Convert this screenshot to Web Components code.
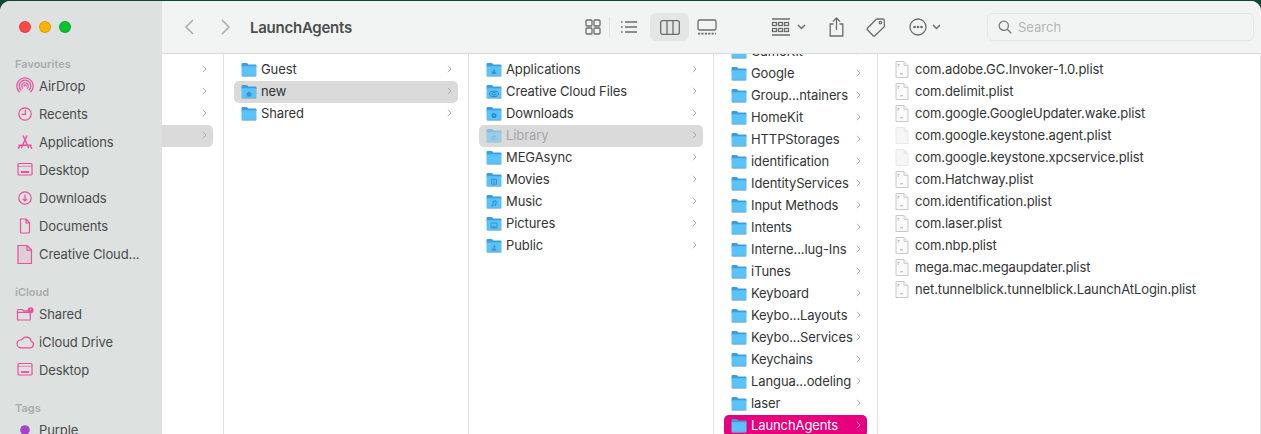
<!DOCTYPE html>
<html>
<head>
<meta charset="utf-8">
<title>LaunchAgents</title>
<style>
    html, body { margin: 0; height: 434px; overflow: hidden; background: #0b4a33; }
    body { font-family: Inter, Roboto, "Liberation Sans", sans-serif; font-size: 13px; }
</style>
</head>
<body>
<finder-window>
    <finder-sidebar slot="sidebar">
        <side-head first>Favourites</side-head>
        <side-item icon="airdrop">AirDrop</side-item>
        <side-item icon="recents">Recents</side-item>
        <side-item icon="apps">Applications</side-item>
        <side-item icon="desktop">Desktop</side-item>
        <side-item icon="downloads">Downloads</side-item>
        <side-item icon="documents">Documents</side-item>
        <side-item icon="cloudfile">Creative Cloud...</side-item>
        <side-head>iCloud</side-head>
        <side-item icon="shared">Shared</side-item>
        <side-item icon="cloud">iCloud Drive</side-item>
        <side-item icon="desktop">Desktop</side-item>
        <side-head>Tags</side-head>
        <side-item icon="purple">Purple</side-item>
    </finder-sidebar>
    <finder-toolbar slot="toolbar" title="LaunchAgents"></finder-toolbar>

    <finder-column slot="columns" style="--w:62px;--pad-l:0px;--pad-r:10px">
        <finder-row kind="none"></finder-row>
        <finder-row kind="none"></finder-row>
        <finder-row kind="none"></finder-row>
        <finder-row kind="none" state="open" flat></finder-row>
    </finder-column>
    <finder-column slot="columns" style="--w:245px">
        <finder-row>Guest</finder-row>
        <finder-row glyph="home" state="open">new</finder-row>
        <finder-row>Shared</finder-row>
    </finder-column>
    <finder-column slot="columns" style="--w:245px">
        <finder-row glyph="apps">Applications</finder-row>
        <finder-row glyph="cc">Creative Cloud Files</finder-row>
        <finder-row glyph="down">Downloads</finder-row>
        <finder-row glyph="lib" state="dim">Library</finder-row>
        <finder-row>MEGAsync</finder-row>
        <finder-row glyph="movie">Movies</finder-row>
        <finder-row glyph="music">Music</finder-row>
        <finder-row glyph="pic">Pictures</finder-row>
        <finder-row glyph="pub">Public</finder-row>
    </finder-column>
    <finder-column slot="columns" style="--w:164px;--top:-18px">
        <finder-row>GameKit</finder-row>
        <finder-row>Google</finder-row>
        <finder-row>Group...ntainers</finder-row>
        <finder-row>HomeKit</finder-row>
        <finder-row>HTTPStorages</finder-row>
        <finder-row>identification</finder-row>
        <finder-row>IdentityServices</finder-row>
        <finder-row>Input Methods</finder-row>
        <finder-row>Intents</finder-row>
        <finder-row>Interne...lug-Ins</finder-row>
        <finder-row>iTunes</finder-row>
        <finder-row>Keyboard</finder-row>
        <finder-row>Keybo...Layouts</finder-row>
        <finder-row>Keybo...Services</finder-row>
        <finder-row>Keychains</finder-row>
        <finder-row>Langua...odeling</finder-row>
        <finder-row>laser</finder-row>
        <finder-row state="active">LaunchAgents</finder-row>
    </finder-column>
    <finder-column slot="columns" style="--w:383px;--pad-l:10px">
        <finder-row kind="plist">com.adobe.GC.Invoker-1.0.plist</finder-row>
        <finder-row kind="plist">com.delimit.plist</finder-row>
        <finder-row kind="plist">com.google.GoogleUpdater.wake.plist</finder-row>
        <finder-row kind="blank">com.google.keystone.agent.plist</finder-row>
        <finder-row kind="blank">com.google.keystone.xpcservice.plist</finder-row>
        <finder-row kind="plist">com.Hatchway.plist</finder-row>
        <finder-row kind="plist">com.identification.plist</finder-row>
        <finder-row kind="plist">com.laser.plist</finder-row>
        <finder-row kind="plist">com.nbp.plist</finder-row>
        <finder-row kind="plist">mega.mac.megaupdater.plist</finder-row>
        <finder-row kind="plist">net.tunnelblick.tunnelblick.LaunchAtLogin.plist</finder-row>
    </finder-column>
</finder-window>

<script>
// pink line icons of the sidebar, all on a 24x20 box
const sideIcons = {
    airdrop: `<g fill="none"><path d="M6.6 16.2a8.2 8.2 0 1 1 10.8 0"/><path d="M8.2 14.4a5.8 5.8 0 1 1 7.6 0"/><path d="M9.9 12.6a3.3 3.3 0 1 1 4.2 0"/><path d="M11.2 10.6a1 1 0 1 1 1.6 0"/></g>`,
    recents: `<g fill="none"><circle cx="12" cy="10" r="6.2"/><path d="M12.4 5.8v4.6H8.6"/></g>`,
    apps: `<g fill="none"><path d="M10 3.5l5.8 12.8M14 3.5L8.2 16.3M5.4 13.2h13.2M5 16.6l1.8-2.6M19 16.6l-1.8-2.6" stroke-width="1.4"/></g>`,
    desktop: `<rect x="5" y="3.5" width="14" height="11.5" rx="1" fill="none"/><path d="M5 6.3h14" stroke-opacity=".5"/><path d="M8 12h8" stroke-width="1.8"/>`,
    downloads: `<g fill="none"><circle cx="12" cy="10" r="6.2"/><path d="M12 6.6v6.2M9.8 10.8l2.2 2.2 2.2-2.2"/></g>`,
    documents: `<path fill="none" d="M7.5 3h5.6l3.4 3.8v9.2a1 1 0 0 1-1 1H8.5a1 1 0 0 1-1-1z M13 3v4h3.5"/>`,
    cloudfile: `<path fill="#e0ced6" d="M5 1.5h9.2L18.5 6v13.5H5z"/><path fill="none" d="M14 1.5V6.2h4.5"/>`,
    shared: `<path fill="none" d="M4.5 16V6.5a1 1 0 0 1 1-1h4l1.2 1.4h6.6V16zM4.5 8.4h12.8"/><circle cx="17.6" cy="6.2" r="3" fill="#ee4e9b" stroke="none"/><path d="M17.6 4.8v1.6" stroke="#dde1e0" stroke-width="1"/>`,
    cloud: `<path fill="none" d="M7.4 15.8h10a3.3 3.3 0 0 0 .8-6.4 5 5 0 0 0-9.4-1.6 4 4 0 0 0-1.4 8z"/>`,
    purple: `<circle cx="12" cy="10" r="4.8" fill="#a246c9" stroke="none"/>`
};

// darker mark that sits on the face of a system folder
const folderGlyphs = {
    home: `<path d="M8 7.6l3.2 2.5h-.9v2.3H5.7v-2.3h-.9z" fill="#3a90d2"/>`,
    apps: `<path d="M8 6.6l2.6 5.4H5.4z" fill="#3a90d2"/>`,
    cc: `<ellipse cx="8" cy="9.8" rx="4.6" ry="2.7" fill="none" stroke="#2d86cb"/><ellipse cx="8" cy="9.8" rx="2.2" ry="1.3" fill="none" stroke="#2d86cb"/>`,
    down: `<circle cx="8" cy="9.5" r="2.5" fill="#2d86cb"/><circle cx="8" cy="9.5" r=".8" fill="#5ac4fa"/>`,
    lib: `<path d="M8 6.8l2.6 2.4H5.4zM5 10.6h6v1H5z" fill="#3a90d2"/>`,
    movie: `<path d="M5.5 7.2h5v5h-5z" fill="none" stroke="#3a90d2"/><path d="M8 7.2v5" stroke="#3a90d2"/>`,
    music: `<path d="M7 11.6V7.4l3-.6v4" fill="none" stroke="#2d86cb"/><circle cx="6.3" cy="11.6" r=".9" fill="#2d86cb"/><circle cx="9.3" cy="10.9" r=".9" fill="#2d86cb"/>`,
    pic: `<path d="M5 7h6v5H5z" fill="none" stroke="#3a90d2"/><path d="M5.4 11.6l2-2 1.4 1.2 1-.8 1.2 1.6z" fill="#3a90d2"/>`,
    pub: `<path d="M8 7.4a1.2 1.2 0 1 1 0 2.3 1.2 1.2 0 0 1 0-2.3zM5.5 12.6c.3-3 4.7-3 5 0z" fill="#3a90d2"/>`
};

function folderSvg(glyph) {
    return `<svg width="16" height="15" viewBox="0 0 16 15">
        <path d="M.5 2.4C.5 1.6 1 1 1.8 1h3.6c.5 0 .8.2 1.1.5l.8.9h7c.8 0 1.2.5 1.2 1.2V5H.5z" fill="#3f9ddf"/>
        <path d="M.5 4.2h15v9.1c0 .7-.4 1.1-1.1 1.1H1.6c-.7 0-1.1-.4-1.1-1.1z" fill="#5ac4fa"/>
        <path d="M.8 14.1h14.4" stroke="#7f9fb5" stroke-width=".7"/>
        ${folderGlyphs[glyph] || ''}
    </svg>`;
}

function docSvg(lines) {
    const marks = lines
        ? `<path d="M2.5 3.4h2M2.5 5h1.4M5 12.8h3" stroke="#b2b2b2" stroke-width="1"/>`
        : '';
    return `<svg width="14" height="17" viewBox="0 0 14 17">
        <path d="M1 .5h8l4 4v12H1z" fill="${lines ? '#fafafa' : '#f6f6f6'}" stroke="${lines ? '#c8c8c8' : '#e8e8e8'}"/>
        <path d="M9 .5v4h4" fill="#ececec" stroke="${lines ? '#d0d0d0' : '#e8e8e8'}"/>
        ${marks}
    </svg>`;
}

class FinderWindow extends HTMLElement {
    constructor() {
        super();
        this.attachShadow({ mode: 'open' });
        this.shadowRoot.innerHTML = `
            <style>
                :host {
                    display: flex;
                    width: 1261px;
                    height: 433px;
                    margin-top: 1px;
                    overflow: hidden;
                    background: #fff;
                    border-radius: 10px 10px 0 0;
                }
                .main {
                    flex: 1;
                    min-width: 0;
                    display: flex;
                    flex-direction: column;
                }
                .columns {
                    flex: 1;
                    min-height: 0;
                    display: flex;
                    overflow: hidden;
                }
            </style>
            <slot name="sidebar"></slot>
            <div class="main">
                <slot name="toolbar"></slot>
                <div class="columns"><slot name="columns"></slot></div>
            </div>
        `;
    }
}
customElements.define('finder-window', FinderWindow);

class FinderSidebar extends HTMLElement {
    constructor() {
        super();
        this.attachShadow({ mode: 'open' });
        this.shadowRoot.innerHTML = `
            <style>
                :host {
                    display: flex;
                    flex-direction: column;
                    flex: none;
                    width: 162px;
                    box-sizing: border-box;
                    background: #dde1e0;
                    overflow: hidden;
                }
                .lights {
                    display: flex;
                    gap: 8px;
                    flex: none;
                    padding: 20px 0 0 19px;
                }
                .lights i {
                    width: 12px;
                    height: 12px;
                    border-radius: 50%;
                    box-sizing: border-box;
                    border: .5px solid rgba(0, 0, 0, 0.12);
                }
            </style>
            <div class="lights">
                <i style="background:#fe4a45"></i>
                <i style="background:#fdb303"></i>
                <i style="background:#0ac22c"></i>
            </div>
            <slot></slot>
        `;
    }
}
customElements.define('finder-sidebar', FinderSidebar);

class SideHead extends HTMLElement {
    constructor() {
        super();
        this.attachShadow({ mode: 'open' });
        this.shadowRoot.innerHTML = `
            <style>
                :host {
                    display: block;
                    flex: none;
                    height: 14px;
                    line-height: 14px;
                    margin: 17px 0 1px;
                    padding-left: 15px;
                    font-size: 11px;
                    font-weight: 600;
                    color: #a9adad;
                }
                :host([first]) { margin-top: 24px; }
            </style>
            <slot></slot>
        `;
    }
}
customElements.define('side-head', SideHead);

class SideItem extends HTMLElement {
    constructor() {
        super();
        this.attachShadow({ mode: 'open' });
    }

    connectedCallback() {
        this.render();
    }

    render() {
        this.shadowRoot.innerHTML = `
            <style>
                :host {
                    display: flex;
                    flex: none;
                    align-items: center;
                    height: 28px;
                    padding-left: 13px;
                    color: #4a4c4c;
                }
                svg {
                    flex: none;
                    margin-right: 2px;
                    stroke: #ee4e9b;
                    stroke-width: 1.2;
                }
                span { letter-spacing: -.1px; white-space: nowrap; }
            </style>
            <svg width="24" height="20" viewBox="0 0 24 20">${sideIcons[this.getAttribute('icon')]}</svg>
            <span><slot></slot></span>
        `;
    }
}
customElements.define('side-item', SideItem);

class FinderToolbar extends HTMLElement {
    constructor() {
        super();
        this.attachShadow({ mode: 'open' });
    }

    connectedCallback() {
        this.render();
    }

    render() {
        this.shadowRoot.innerHTML = `
            <style>
                :host {
                    display: flex;
                    flex: none;
                    align-items: center;
                    height: 52px;
                    border-bottom: 1px solid #d8dbda;
                    background: #f1f4f3;
                    position: relative;
                    z-index: 1;
                    color: #6a6d6d;
                }
                svg { display: block; flex: none; fill: none; stroke: currentColor; stroke-width: 1.3; }
                .nav { color: #a8acac; }
                .title {
                    width: 350px;
                    margin-left: 18px;
                    font-size: 15px;
                    font-weight: 600;
                    letter-spacing: -.25px;
                    color: #4c4e4e;
                    white-space: nowrap;
                }
                .sel {
                    display: flex;
                    align-items: center;
                    justify-content: center;
                    width: 39px;
                    height: 28px;
                    border-radius: 6px;
                    background: #e3e6e5;
                }
                .sep { width: 1px; height: 20px; background: #e0e3e2; }
                .search {
                    display: flex;
                    align-items: center;
                    box-sizing: border-box;
                    width: 267px;
                    height: 28px;
                    margin-left: 46px;
                    padding-left: 10px;
                    border: 1px solid #e4e7e6;
                    border-radius: 6px;
                    color: #b4b7b7;
                }
                .search svg { margin-right: 6px; color: #777a7a; }
            </style>
            <svg class="nav" style="margin-left:21px" width="12" height="16" viewBox="0 0 12 16"><path d="M10 1L3 8l7 7" stroke-width="1.5"/></svg>
            <svg class="nav" style="margin-left:25px" width="12" height="16" viewBox="0 0 12 16"><path d="M2 1l7 7-7 7" stroke-width="1.5"/></svg>
            <span class="title">${this.getAttribute('title')}</span>
            <svg style="margin-left:-15px" width="16" height="16" viewBox="0 0 16 16"><rect x="1" y="1" width="6" height="6" rx="1"/><rect x="9" y="1" width="6" height="6" rx="1"/><rect x="1" y="9" width="6" height="6" rx="1"/><rect x="9" y="9" width="6" height="6" rx="1"/></svg>
            <i class="sep" style="margin-left:8px"></i>
            <svg style="margin-left:10px" width="18" height="14" viewBox="0 0 18 14"><path d="M5 2h12M5 7h12M5 12h12"/><path d="M1 2h1.6M1 7h1.6M1 12h1.6" stroke-width="1.6"/></svg>
            <div class="sel" style="margin-left:12px">
                <svg width="20" height="15" viewBox="0 0 20 15"><rect x=".7" y=".7" width="18.6" height="13.6" rx="2"/><path d="M7 1v13M13 1v13"/></svg>
            </div>
            <svg style="margin-left:8px" width="20" height="16" viewBox="0 0 20 16"><rect x="1" y="1" width="18" height="10" rx="1.5"/><path d="M1 14.6h18" stroke-width="1.6" stroke-dasharray="2.2 1.2"/></svg>
            <svg style="margin-left:54px" width="19" height="18" viewBox="0 0 19 18"><path d="M1 1h18M1 17h18"/><rect x="1.5" y="4.5" width="4" height="3"/><rect x="7.5" y="4.5" width="4" height="3"/><rect x="13.5" y="4.5" width="4" height="3"/><rect x="1.5" y="10.5" width="4" height="3"/><rect x="7.5" y="10.5" width="4" height="3"/><rect x="13.5" y="10.5" width="4" height="3"/></svg>
            <svg style="margin-left:7px" width="9" height="6" viewBox="0 0 9 6"><path d="M1 1l3.5 3.5L8 1" stroke-width="1.5"/></svg>
            <svg style="margin-left:23px" width="15" height="20" viewBox="0 0 15 20"><path d="M4.5 7H1.2v12h12.6V7h-3.3M7.5 13V1.2M3.9 4.6l3.6-3.6 3.6 3.6"/></svg>
            <svg style="margin-left:22px" width="20" height="20" viewBox="0 0 20 20"><path d="M1.4 11.2l8.8-9c.3-.3.6-.4 1-.4l6 .2c.6 0 1 .5 1 1l.2 6c0 .4-.1.7-.4 1l-9.2 8.8c-.5.5-1.2.5-1.6 0l-5.8-6c-.5-.5-.5-1.1 0-1.6z"/><circle cx="14.4" cy="5.6" r="1.2"/></svg>
            <svg style="margin-left:22px" width="22" height="22" viewBox="0 0 22 22"><circle cx="10" cy="11" r="8"/><circle cx="6.5" cy="11" r=".7" fill="currentColor"/><circle cx="10" cy="11" r=".7" fill="currentColor"/><circle cx="13.5" cy="11" r=".7" fill="currentColor"/></svg>
            <svg style="margin-left:2px" width="9" height="6" viewBox="0 0 9 6"><path d="M1 1l3.5 3.5L8 1" stroke-width="1.5"/></svg>
            <div class="search">
                <svg width="14" height="14" viewBox="0 0 14 14"><circle cx="5.8" cy="5.8" r="4.6"/><path d="M9.2 9.2l4 4"/></svg>
                <span>Search</span>
            </div>
        `;
    }
}
customElements.define('finder-toolbar', FinderToolbar);

class FinderColumn extends HTMLElement {
    constructor() {
        super();
        this.attachShadow({ mode: 'open' });
        this.shadowRoot.innerHTML = `
            <style>
                :host {
                    display: block;
                    flex: none;
                    box-sizing: border-box;
                    width: var(--w);
                    height: 100%;
                    overflow: hidden;
                    padding: 5px var(--pad-r, 10px) 0 var(--pad-l, 10px);
                    border-right: 1px solid #e2e2e2;
                }
                .list { margin-top: var(--top, 0); }
            </style>
            <div class="list"><slot></slot></div>
        `;
    }
}
customElements.define('finder-column', FinderColumn);

class FinderRow extends HTMLElement {
    constructor() {
        super();
        this.attachShadow({ mode: 'open' });
    }

    connectedCallback() {
        this.render();
    }

    render() {
        const kind = this.getAttribute('kind') || 'folder';
        const glyph = this.getAttribute('glyph');
        let icon = '';
        if (kind === 'folder') icon = folderSvg(glyph);
        if (kind === 'plist') icon = docSvg(true);
        if (kind === 'blank') icon = docSvg(false);
        const files = kind === 'plist' || kind === 'blank';
        const chevron = files ? '' : `<svg class="chev" width="5" height="8" viewBox="0 0 5 8"><path d="M1 .8l3 3.2-3 3.2"/></svg>`;

        this.shadowRoot.innerHTML = `
            <style>
                :host {
                    display: flex;
                    align-items: center;
                    box-sizing: border-box;
                    height: 22px;
                    padding: 0 6px 2px 7px;
                    border-radius: 5px;
                    color: #333537;
                }
                :host([state="open"]), :host([state="dim"]) { background: #dadada; }
                :host([state="dim"]) { color: #a4a6a8; }
                :host([state="dim"]) .icon { opacity: .5; }
                :host([state="active"]) { background: #e6007e; color: #fff; }
                :host([flat]) { border-radius: 0 5px 5px 0; }
                .icon { display: flex; flex: none; width: 20px; }
                .label { flex: 1; min-width: 0; white-space: nowrap; letter-spacing: -.1px; }
                .chev { flex: none; fill: none; stroke: #a9abac; stroke-width: 1; }
                :host([state="active"]) .chev { stroke: #f6a8d2; }
            </style>
            <span class="icon">${icon}</span>
            <span class="label"><slot></slot></span>
            ${chevron}
        `;
    }
}
customElements.define('finder-row', FinderRow);
</script>
</body>
</html>
